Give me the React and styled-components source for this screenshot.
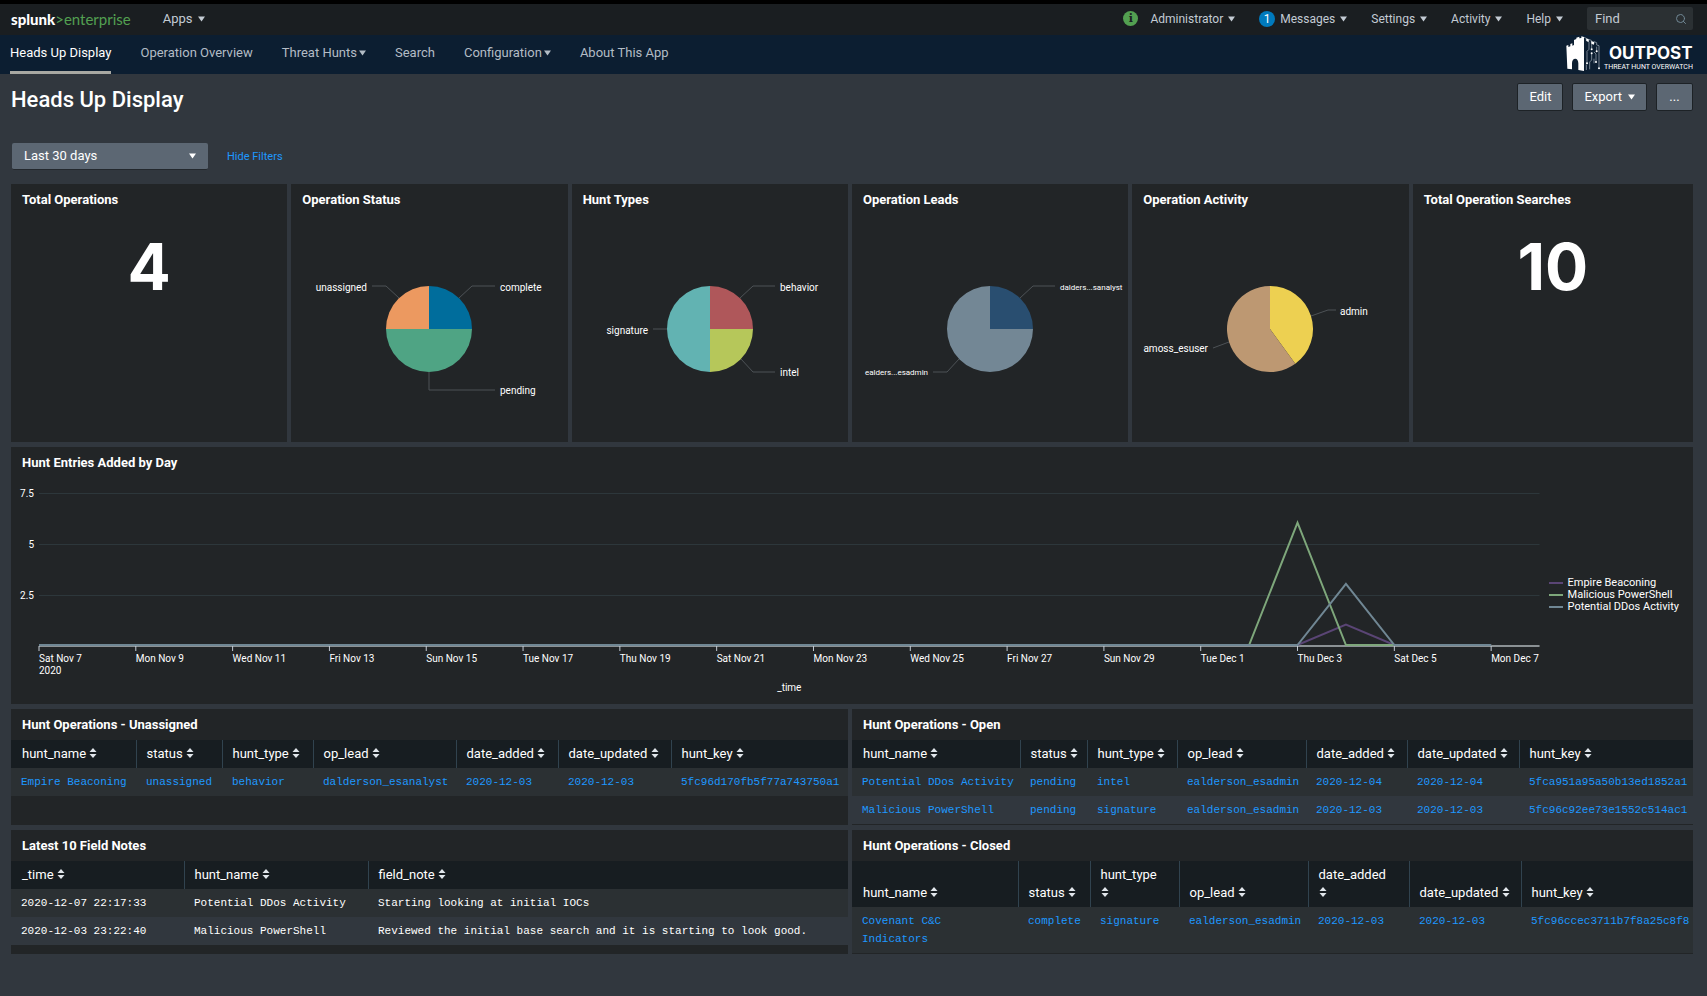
import { useState } from "react";
import styled, { createGlobalStyle } from "styled-components";
import { FiSearch } from "react-icons/fi";

const hunts = {
  unassigned: [
    [
      "Empire Beaconing",
      "unassigned",
      "behavior",
      "dalderson_esanalyst",
      "2020-12-03",
      "2020-12-03",
      "5fc96d170fb5f77a743750a1",
    ],
  ],
  open: [
    [
      "Potential DDos Activity",
      "pending",
      "intel",
      "ealderson_esadmin",
      "2020-12-04",
      "2020-12-04",
      "5fca951a95a50b13ed1852a1",
    ],
    [
      "Malicious PowerShell",
      "pending",
      "signature",
      "ealderson_esadmin",
      "2020-12-03",
      "2020-12-03",
      "5fc96c92ee73e1552c514ac1",
    ],
  ],
  closed: [
    [
      "Covenant C&C Indicators",
      "complete",
      "signature",
      "ealderson_esadmin",
      "2020-12-03",
      "2020-12-03",
      "5fc96ccec3711b7f8a25c8f8",
    ],
  ],
};

const fieldNotes = [
  [
    "2020-12-07 22:17:33",
    "Potential DDos Activity",
    "Starting looking at initial IOCs",
  ],
  [
    "2020-12-03 23:22:40",
    "Malicious PowerShell",
    "Reviewed the initial base search and it is starting to look good.",
  ],
];

const huntFields = [
  "hunt_name",
  "status",
  "hunt_type",
  "op_lead",
  "date_added",
  "date_updated",
  "hunt_key",
];

// slices go clockwise from the top, leader and label are relative to the pie center
const pies = [
  {
    title: "Operation Status",
    slices: [
      {
        name: "complete",
        value: 1,
        color: "#006d9c",
        leader: "30,-31 43,-43 66,-43",
        x: 71,
        y: -38,
      },
      {
        name: "pending",
        value: 2,
        color: "#4fa484",
        leader: "0,43 0,61 66,61",
        x: 71,
        y: 65,
      },
      {
        name: "unassigned",
        value: 1,
        color: "#ec9960",
        leader: "-30,-31 -43,-43 -57,-43",
        x: -62,
        y: -38,
      },
    ],
  },
  {
    title: "Hunt Types",
    slices: [
      {
        name: "behavior",
        value: 1,
        color: "#af575a",
        leader: "30,-31 43,-43 65,-43",
        x: 70,
        y: -38,
      },
      {
        name: "intel",
        value: 1,
        color: "#b6c75a",
        leader: "31,30 43,43 65,43",
        x: 70,
        y: 47,
      },
      {
        name: "signature",
        value: 2,
        color: "#62b3b2",
        leader: "-43,0 -57,0",
        x: -62,
        y: 5,
      },
    ],
  },
  {
    title: "Operation Leads",
    small: true,
    slices: [
      {
        name: "dalders...sanalyst",
        value: 1,
        color: "#294e70",
        leader: "30,-31 43,-43 65,-43",
        x: 70,
        y: -39,
      },
      {
        name: "ealders...esadmin",
        value: 3,
        color: "#738795",
        leader: "-31,30 -43,43 -57,43",
        x: -62,
        y: 46,
      },
    ],
  },
  {
    title: "Operation Activity",
    slices: [
      {
        name: "admin",
        value: 2,
        color: "#edd051",
        leader: "41,-13 58,-19 66,-19",
        x: 70,
        y: -14,
      },
      {
        name: "amoss_esuser",
        value: 3,
        color: "#bd9872",
        leader: "-41,13 -57,19",
        x: -62,
        y: 23,
      },
    ],
  },
];

const DAYS = 31;
const dayLabels = [
  "Sat Nov 7",
  "Mon Nov 9",
  "Wed Nov 11",
  "Fri Nov 13",
  "Sun Nov 15",
  "Tue Nov 17",
  "Thu Nov 19",
  "Sat Nov 21",
  "Mon Nov 23",
  "Wed Nov 25",
  "Fri Nov 27",
  "Sun Nov 29",
  "Tue Dec 1",
  "Thu Dec 3",
  "Sat Dec 5",
  "Mon Dec 7",
];

const series = [
  { name: "Empire Beaconing", color: "#5a4575", counts: { 27: 1 } },
  { name: "Malicious PowerShell", color: "#7ea77b", counts: { 26: 6 } },
  { name: "Potential DDos Activity", color: "#708794", counts: { 27: 3 } },
];

function Caret() {
  return (
    <svg width="7" height="6" viewBox="0 0 7 6" aria-hidden="true">
      <path d="M0 0.5h7L3.5 5.5z" fill="currentColor" />
    </svg>
  );
}

function SortIcon() {
  return (
    <svg width="8" height="10" viewBox="0 0 8 10" aria-hidden="true">
      <path d="M4 0l3.5 4h-7zM4 10L.5 6h7z" fill="#e1e6eb" />
    </svg>
  );
}

function OutpostLogo() {
  return (
    <svg width="127" height="37" viewBox="0 0 127 37" role="img" aria-label="Outpost">
      <g transform="translate(-7 -3) scale(0.3333)">
        <path
          d="M22 41l6-2v6l6-2v-7l6-2v7l5-2V24l7-3v-4l9-3v5l6-1v-5l8 2v102l-17-3V94c0-8-4-14-9-14-6 0-10 6-10 14v18l-14-2z"
          fill="#fff"
        />
        <g fill="none" stroke="#aab5c0" strokeWidth="2">
          <path d="M75 16l7 3v6l7 3v-6l8 3v7l8 3v-6l8 3v7l7 2v66" />
          <path d="M90 30v22l-6 6v36M98 34v16M105 60l6 6v24M113 44v14" />
          <path d="M82 98v16M98 66v18l-6 6v22M105 80v14" />
        </g>
        <g fill="#fff">
          <path d="M82 19l7 3v8l-7-3zM97 27l8 3v8l-8-3z" />
          <circle cx="98" cy="52" r="3" />
          <circle cx="84" cy="94" r="3" />
          <circle cx="98" cy="64" r="3" />
          <circle cx="111" cy="90" r="3" />
          <circle cx="113" cy="58" r="3" />
          <circle cx="120" cy="109" r="3" />
        </g>
      </g>
      <text x="43" y="24" fill="#fff" fontSize="17" fontWeight="700" fontFamily="Inter, sans-serif">
        OUTPOST
      </text>
      <text x="38" y="34" fill="#fff" fontSize="7" fontFamily="Roboto, sans-serif">
        THREAT HUNT OVERWATCH
      </text>
    </svg>
  );
}

function slicePath(from, to) {
  const r = 43;
  const point = (t) => {
    const a = t * 2 * Math.PI;
    return `${(r * Math.sin(a)).toFixed(2)} ${(-r * Math.cos(a)).toFixed(2)}`;
  };
  return `M0 0L${point(from)}A${r} ${r} 0 ${to - from > 0.5 ? 1 : 0} 1 ${point(to)}Z`;
}

function PieChart({ slices, small }) {
  const total = slices.reduce((sum, s) => sum + s.value, 0);
  let start = 0;
  return (
    <PieSvg viewBox="-138 -114 276 226">
      {slices.map((s) => {
        const from = start;
        start += s.value / total;
        return (
          <g key={s.name}>
            <path d={slicePath(from, start)} fill={s.color} />
            <polyline points={s.leader} fill="none" stroke="#4d5256" />
            <PieLabel x={s.x} y={s.y} $small={small} textAnchor={s.x < 0 ? "end" : "start"}>
              {s.name}
            </PieLabel>
          </g>
        );
      })}
    </PieSvg>
  );
}

function LineChart() {
  const at = (day) => `${(day / DAYS) * 100}%`;
  const pointsOf = (counts) =>
    Array.from({ length: DAYS }, (_, d) => `${d},${7.5 - (counts[d] || 0)}`).join(" ");

  return (
    <ChartBody>
      <YAxis>
        <span>7.5</span>
        <span>5</span>
        <span>2.5</span>
      </YAxis>
      <Plot>
        <PlotSvg>
          {[1, 52, 103].map((y) => (
            <line key={y} x1="0" x2="100%" y1={y + 0.5} y2={y + 0.5} stroke="#2d373b" />
          ))}
          <line x1="0" x2="100%" y1="154" y2="154" stroke="#8b9194" strokeWidth="2" />
          <svg
            x="0"
            y="0"
            width="100%"
            height="153"
            viewBox={`0 0 ${DAYS} 7.5`}
            preserveAspectRatio="none"
            overflow="visible"
          >
            {series.map((s) => (
              <polyline
                key={s.name}
                points={pointsOf(s.counts)}
                fill="none"
                stroke={s.color}
                strokeWidth="2"
                vectorEffect="non-scaling-stroke"
              />
            ))}
          </svg>
          {dayLabels.map((label, i) => (
            <g key={label}>
              <line x1={at(i * 2)} x2={at(i * 2)} y1="154" y2="159" stroke="#c3cbd4" />
              <AxisText x={at(i * 2)} y="170">
                {label}
              </AxisText>
            </g>
          ))}
          <AxisText x="0" y="182">
            2020
          </AxisText>
          <AxisText x="50%" y="199" textAnchor="middle">
            _time
          </AxisText>
        </PlotSvg>
      </Plot>
      <Legend>
        {series.map((s) => (
          <li key={s.name}>
            <LegendLine $color={s.color} />
            {s.name}
          </li>
        ))}
      </Legend>
    </ChartBody>
  );
}

function DataTable({ fields, widths, rows, linked, stacked = [] }) {
  return (
    <Table>
      <colgroup>
        {widths.map((w, i) => (
          <Col key={fields[i]} $width={w} />
        ))}
      </colgroup>
      <thead>
        <tr>
          {fields.map((field) => (
            <th key={field} scope="col">
              {field}
              {stacked.includes(field) ? <br /> : " "}
              <SortIcon />
            </th>
          ))}
        </tr>
      </thead>
      <tbody>
        {rows.map((row) => (
          <tr key={row[0]}>
            {row.map((cell, i) => (
              <td key={i}>{linked ? <a href="#hunt">{cell}</a> : cell}</td>
            ))}
          </tr>
        ))}
      </tbody>
    </Table>
  );
}

function App() {
  const [range, setRange] = useState("Last 30 days");

  return (
    <Page>
      <GlobalStyle />
      <TopBar>
        <Brand href="#home">
          <strong>splunk</strong>&gt;enterprise
        </Brand>
        <MenuButton>
          Apps <Caret />
        </MenuButton>
        <TopRight>
          <InfoDot>i</InfoDot>
          <MenuButton $compact>
            Administrator <Caret />
          </MenuButton>
          <MenuButton $compact>
            <Badge>1</Badge>
            Messages <Caret />
          </MenuButton>
          <MenuButton $compact>
            Settings <Caret />
          </MenuButton>
          <MenuButton $compact>
            Activity <Caret />
          </MenuButton>
          <MenuButton $compact>
            Help <Caret />
          </MenuButton>
          <FindBox>
            <input type="text" placeholder="Find" aria-label="Find" />
            <FiSearch size={12} />
          </FindBox>
        </TopRight>
      </TopBar>
      <AppNav>
        <NavLink href="#hud" $active>
          Heads Up Display
        </NavLink>
        <NavLink href="#overview">Operation Overview</NavLink>
        <NavLink href="#hunts">
          Threat Hunts
          <Caret />
        </NavLink>
        <NavLink href="#search">Search</NavLink>
        <NavLink href="#config">
          Configuration
          <Caret />
        </NavLink>
        <NavLink href="#about">About This App</NavLink>
        <LogoSlot>
          <OutpostLogo />
        </LogoSlot>
      </AppNav>
      <Dashboard>
        <DashHeader>
          <h1>Heads Up Display</h1>
          <Actions>
            <Button>Edit</Button>
            <Button>
              Export <Caret />
            </Button>
            <Button>...</Button>
          </Actions>
        </DashHeader>
        <Filters>
          <SelectBox>
            <select
              aria-label="Time range"
              value={range}
              onChange={(e) => setRange(e.target.value)}
            >
              <option>Last 30 days</option>
              <option>Last 7 days</option>
            </select>
            <Caret />
          </SelectBox>
          <a href="#filters">Hide Filters</a>
        </Filters>

        <PanelRow>
          <Panel $height={258}>
            <h2>Total Operations</h2>
            <BigNumber>4</BigNumber>
          </Panel>
          {pies.map((pie) => (
            <Panel key={pie.title} $height={258}>
              <h2>{pie.title}</h2>
              <PieChart slices={pie.slices} small={pie.small} />
            </Panel>
          ))}
          <Panel $height={258}>
            <h2>Total Operation Searches</h2>
            <BigNumber>10</BigNumber>
          </Panel>
        </PanelRow>

        <PanelRow>
          <Panel $height={257}>
            <h2>Hunt Entries Added by Day</h2>
            <LineChart />
          </Panel>
        </PanelRow>

        <PanelRow>
          <Panel>
            <h2>Hunt Operations - Unassigned</h2>
            <DataTable
              fields={huntFields}
              widths={[125, 86, 91, 143, 102, 113, 177]}
              rows={hunts.unassigned}
              linked
            />
          </Panel>
          <Panel>
            <h2>Hunt Operations - Open</h2>
            <DataTable
              fields={huntFields}
              widths={[168, 67, 90, 129, 101, 112, 174]}
              rows={hunts.open}
              linked
            />
          </Panel>
        </PanelRow>

        <PanelRow>
          <Panel>
            <h2>Latest 10 Field Notes</h2>
            <DataTable
              fields={["_time", "hunt_name", "field_note"]}
              widths={[173, 184, 480]}
              rows={fieldNotes}
            />
          </Panel>
          <Panel>
            <h2>Hunt Operations - Closed</h2>
            <DataTable
              fields={huntFields}
              widths={[166, 72, 89, 129, 101, 112, 172]}
              rows={hunts.closed}
              stacked={["hunt_type", "date_added"]}
              linked
            />
          </Panel>
        </PanelRow>
      </Dashboard>
    </Page>
  );
}

const GlobalStyle = createGlobalStyle`
  * {
    box-sizing: border-box;
  }
  body {
    margin: 0;
    background: #31373e;
    color: #fff;
    font-family: Roboto, sans-serif;
    font-size: 13px;
    line-height: 18px;
  }
  button, input, select {
    font: inherit;
    color: inherit;
  }
  a {
    color: #1e98ff;
    text-decoration: none;
  }
`;

const Page = styled.div`
  min-height: 100vh;
  border-top: 4px solid #000;
`;

const TopBar = styled.header`
  display: flex;
  align-items: center;
  height: 31px;
  padding: 0 14px 2px 11px;
  background: #1a1e21;
  color: #c3cbd4;
`;

const Brand = styled.a`
  margin-right: 32px;
  color: #53a051;
  font-family: Lato, sans-serif;
  font-size: 15px;
  strong {
    color: #fff;
    font-weight: 900;
  }
`;

const MenuButton = styled.button`
  display: flex;
  align-items: center;
  gap: 5px;
  padding: 0;
  border: 0;
  background: none;
  font-size: ${(props) => (props.$compact ? "12px" : "13px")};
`;

const TopRight = styled.div`
  display: flex;
  align-items: center;
  gap: 24px;
  margin-left: auto;
`;

const InfoDot = styled.span`
  width: 15px;
  height: 15px;
  margin-right: -12px;
  border-radius: 50%;
  background: #53a051;
  color: #1a1e21;
  font: 700 11px/15px "DejaVu Serif", serif;
  text-align: center;
`;

const Badge = styled.span`
  width: 16px;
  height: 16px;
  border-radius: 50%;
  background: #007abd;
  color: #fff;
  line-height: 16px;
  text-align: center;
`;

const FindBox = styled.label`
  display: flex;
  align-items: center;
  width: 106px;
  height: 23px;
  padding: 0 6px 0 8px;
  border-radius: 2px;
  background: #2b3033;
  color: #708794;
  input {
    flex: 1;
    min-width: 0;
    padding: 0;
    border: 0;
    outline: 0;
    background: none;
    color: #c3cbd4;
  }
  input::placeholder {
    color: #c3cbd4;
    opacity: 1;
  }
`;

const AppNav = styled.nav`
  display: flex;
  gap: 29px;
  height: 39px;
  padding: 0 14px 0 10px;
  background: #0c1e31;
`;

const NavLink = styled.a`
  display: flex;
  align-items: center;
  gap: 2px;
  height: 39px;
  border-bottom: 3px solid ${(props) => (props.$active ? "#a9a9a3" : "transparent")};
  color: ${(props) => (props.$active ? "#fff" : "#b3bcc5")};
`;

const LogoSlot = styled.div`
  margin-left: auto;
`;

const Dashboard = styled.main`
  padding: 9px 14px 37px 11px;
`;

const DashHeader = styled.div`
  display: flex;
  justify-content: space-between;
  align-items: flex-start;
  height: 60px;
  h1 {
    margin: 2px 0 0;
    font-size: 22px;
    font-weight: 500;
    line-height: 30px;
  }
`;

const Actions = styled.div`
  display: flex;
  gap: 9px;
`;

const Button = styled.button`
  display: flex;
  align-items: center;
  justify-content: center;
  gap: 6px;
  min-width: 37px;
  height: 28px;
  padding: 0 11px;
  border: 1px solid #1d2226;
  border-radius: 2px;
  background: #5c6773;
  color: #fff;
`;

const Filters = styled.div`
  display: flex;
  align-items: center;
  gap: 19px;
  margin-bottom: 14px;
  padding-left: 1px;
  font-size: 11px;
`;

const SelectBox = styled.div`
  position: relative;
  width: 196px;
  height: 27px;
  border-bottom: 1px solid #23282d;
  border-radius: 2px;
  background: #5c6773;
  font-size: 13px;
  select {
    display: block;
    width: 100%;
    height: 25px;
    padding: 0 30px 0 12px;
    border: 0;
    appearance: none;
    background: none;
  }
  svg {
    position: absolute;
    top: 10px;
    right: 12px;
    pointer-events: none;
  }
`;

const PanelRow = styled.div`
  display: grid;
  grid-auto-flow: column;
  grid-auto-columns: minmax(0, 1fr);
  margin-bottom: 5px;
`;

const Panel = styled.section`
  min-height: ${(props) => (props.$height ? `${props.$height}px` : "0")};
  margin-right: 4px;
  padding-bottom: 1px;
  background: #222527;
  &:last-child {
    margin-right: 0;
  }
  h2 {
    margin: 0;
    padding: 7px 11px 6px;
    font-size: 13px;
    font-weight: 700;
    line-height: 18px;
  }
`;

const BigNumber = styled.div`
  padding-top: 18px;
  font-family: Inter, sans-serif;
  font-size: 64px;
  font-weight: 700;
  line-height: 68px;
  text-align: center;
`;

const PieSvg = styled.svg`
  display: block;
  width: 276px;
  max-width: 100%;
  height: 226px;
  margin: 0 auto;
`;

const PieLabel = styled.text`
  fill: #fff;
  font-size: ${(props) => (props.$small ? "8px" : "10px")};
`;

const ChartBody = styled.div`
  display: flex;
  padding: 14px 14px 0 9px;
  font-size: 10px;
`;

const YAxis = styled.div`
  display: flex;
  flex-direction: column;
  gap: 33px;
  width: 19px;
  margin-top: -7px;
  padding-right: 5px;
  text-align: right;
`;

const Plot = styled.div`
  flex: 1;
  min-width: 0;
`;

const PlotSvg = styled.svg`
  display: block;
  width: 100%;
  height: 204px;
  overflow: visible;
`;

const AxisText = styled.text`
  fill: #fff;
  font-size: 10px;
`;

const Legend = styled.ul`
  align-self: flex-start;
  margin: 85px 0 0 9px;
  padding: 0;
  list-style: none;
  font-size: 11px;
  line-height: 12px;
  li {
    display: flex;
    align-items: center;
    gap: 5px;
    white-space: nowrap;
  }
`;

const LegendLine = styled.span`
  width: 14px;
  height: 2px;
  background: ${(props) => props.$color};
`;

const Table = styled.table`
  width: 100%;
  border-collapse: collapse;
  table-layout: fixed;
  th {
    padding: 5px 0 5px 10px;
    border-left: 1px solid #31434f;
    background: #171d21;
    font-weight: 400;
    text-align: left;
    vertical-align: bottom;
  }
  th:first-child {
    padding-left: 11px;
    border-left: 0;
  }
  td {
    padding: 5px 5px 5px 10px;
    background: #2b3033;
    font-family: "Liberation Mono", monospace;
    font-size: 11px;
    line-height: 18px;
    vertical-align: top;
  }
  tr:nth-child(even) td {
    background: #31373e;
  }
`;

const Col = styled.col`
  width: ${(props) => props.$width}px;
`;

export default App;
